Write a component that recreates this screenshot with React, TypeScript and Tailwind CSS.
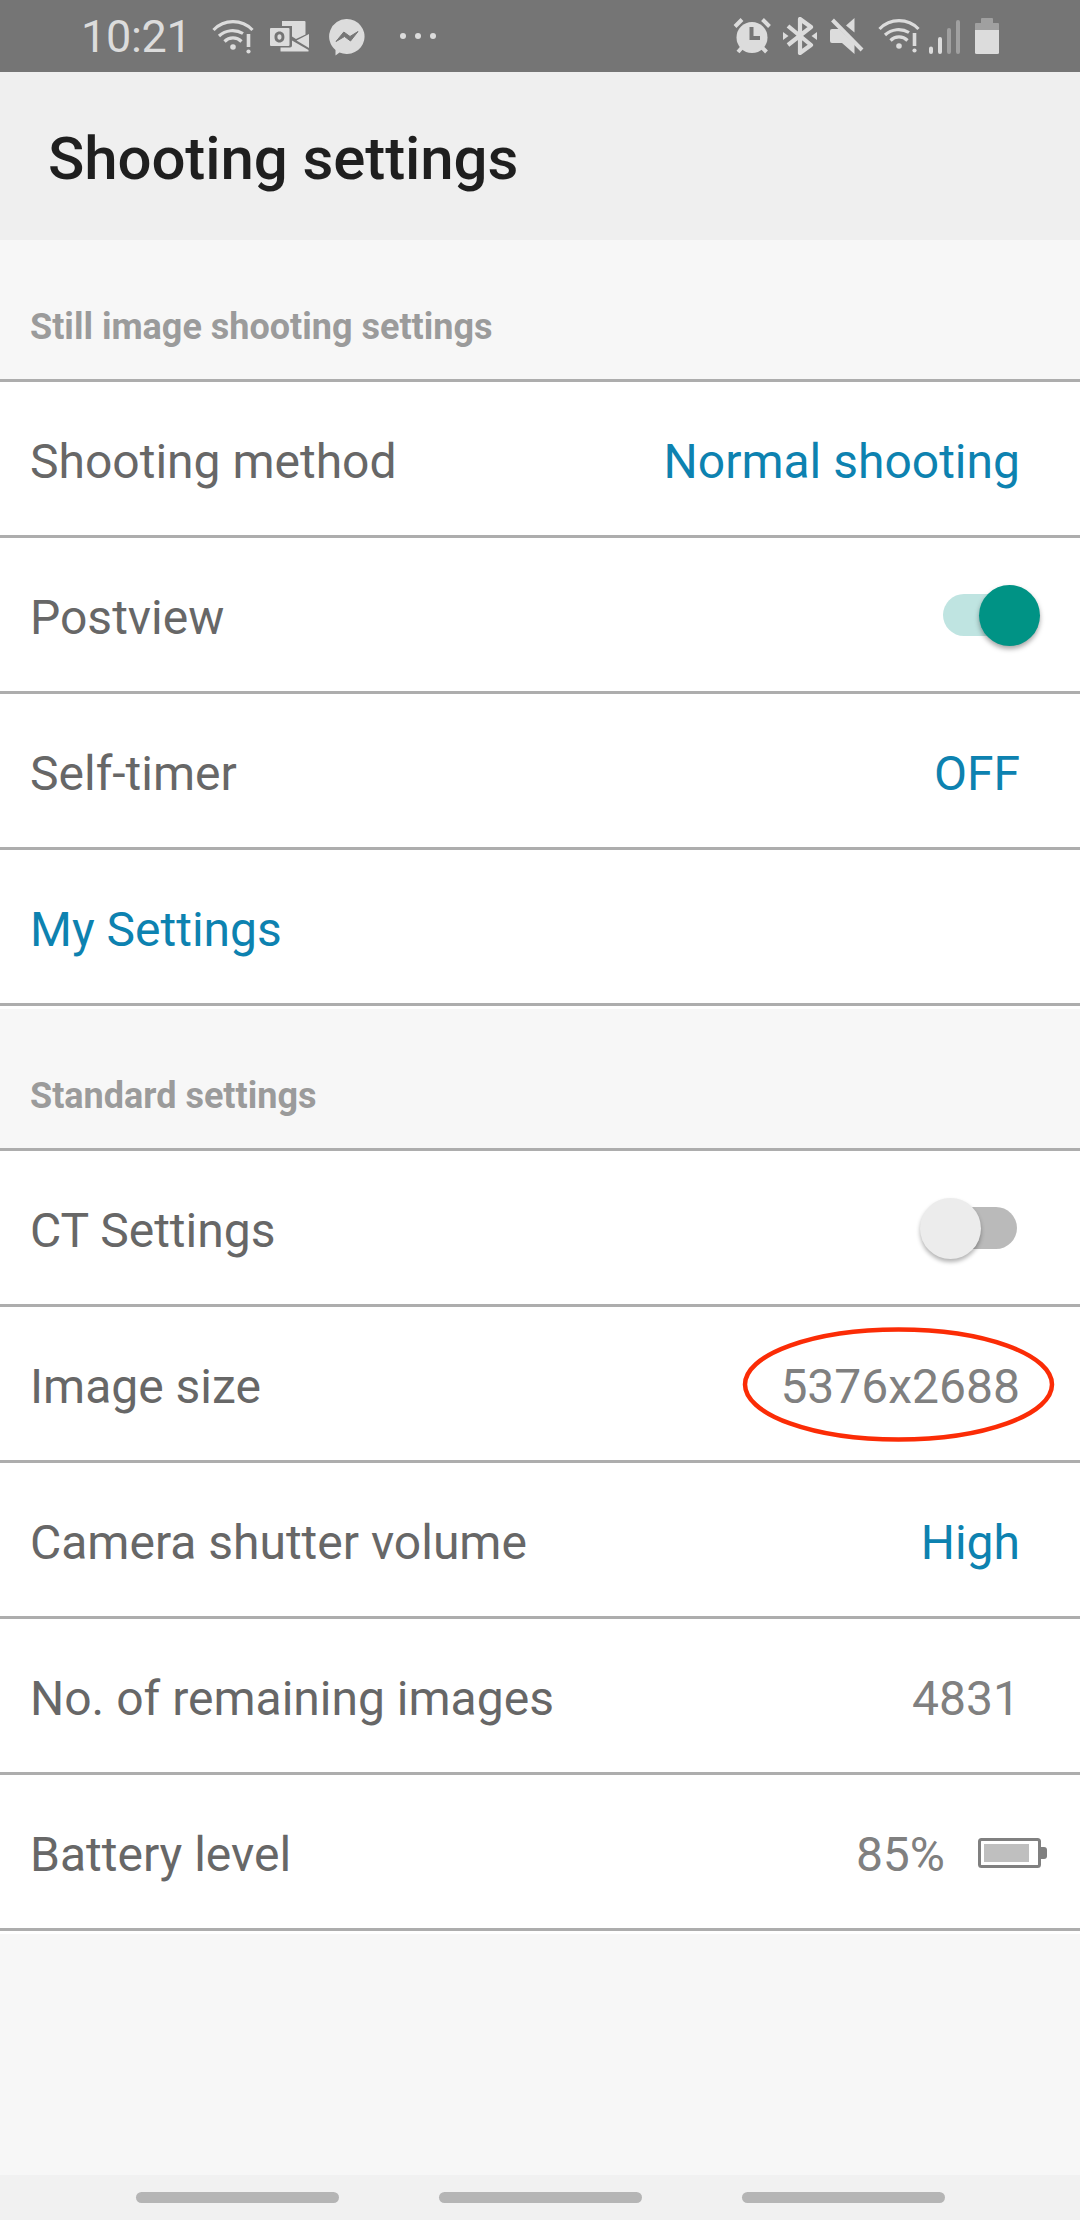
import React from 'react';

interface RowProps {
  label: string;
  link?: boolean;
  children?: React.ReactNode;
}

const WifiAlert = () => (
  <svg className="w-[42px] h-[36px]" viewBox="0 0 42 36" fill="none" stroke="#dcdcdc">
    <path d="M1.5 11A27 27 0 0 1 40.5 11" strokeWidth="3.2" />
    <path d="M7 17A20 20 0 0 1 31 14.5" strokeWidth="3.2" />
    <path d="M12.5 22.5A12 12 0 0 1 29.500 22.500" strokeWidth="3.2" />
    <circle cx="21" cy="28" r="2.800" fill="#dcdcdc" stroke="none" />
    <path d="M36.500 15v13" strokeWidth="3.600" />
    <circle cx="36.500" cy="32.500" r="2.100" fill="#dcdcdc" stroke="none" />
  </svg>
);

const OutlookIcon = () => (
  <svg className="w-[39px] h-[32px]" viewBox="0 0 39 32" fill="#dcdcdc">
    <path d="M12 1h22.500q1 0 1 1v12.500L26 19l-4-2.500V6H12z" />
    <path d="M39 14v14L26.500 20.500z" />
    <path d="M10.500 27.500H20q2 0 2-2V20.500L38.500 30v1.500H11q-.5 0-.5-.5z" />
    <path fillRule="evenodd" d="M1 8h17.500q1 0 1 1v16q0 1-1 1H1q-1 0-1-1V9q0-1 1-1zM9.500 11.500c-3.300 0-5 2.300-5 5.500s1.800 5.500 4.900 5.500c3.200 0 5-2.300 5-5.500s-1.700-5.500-4.900-5.500zm0 2.800c1.300 0 2 1 2 2.700s-.8 2.700-2 2.700-2.100-1-2.100-2.700.8-2.700 2.100-2.700z" />
  </svg>
);

const MessengerIcon = () => (
  <svg className="w-[36px] h-[37px]" viewBox="0 0 36 37">
    <path fill="#dcdcdc" d="M18 0a18 17.500 0 1 1-7.500 33.600L6.500 36.500V31A17.500 17.500 0 0 1 18 0z" />
    <path fill="#767676" d="M7 22.500L14.800 13l6.200 4.500 8-5L21.500 22l-6-4.500z" stroke="#767676" strokeLinejoin="round" />
  </svg>
);

const AlarmIcon = () => (
  <svg className="w-[40px] h-[36px]" viewBox="0 0 40 36" stroke="#dcdcdc" fill="none">
    <circle cx="19" cy="19.500" r="15.500" fill="#dcdcdc" stroke="none" />
    <path d="M2 8.500l7-7M36.500 8.500l-7-7" strokeWidth="4" />
    <path d="M9 29.500L5 34M29 29.500l4.500 4.500" strokeWidth="4" />
    <path d="M18.500 9v11h8.500" stroke="#767676" strokeWidth="4" />
  </svg>
);

const BluetoothIcon = () => (
  <svg className="w-[34px] h-[38px]" viewBox="0 0 34 38" fill="none" stroke="#dcdcdc">
    <path d="M5 9l23 19-11 8V2l11 8L5 28" strokeWidth="4.200" strokeLinejoin="round" />
    <path d="M0 15l5.500 4L0 23zM34 15l-5.500 4 5.500 4z" fill="#dcdcdc" stroke="none" />
  </svg>
);

const MuteIcon = () => (
  <svg className="w-[34px] h-[37px]" viewBox="0 0 34 37" fill="#dcdcdc">
    <path d="M2 12h7l15.500 15.500V37L12 26H2q-2 0-2-2V14q0-2 2-2z" />
    <path d="M24.500 1v14.500L16 8.500z" />
    <path d="M2.500 3l29.500 30" fill="none" stroke="#dcdcdc" strokeWidth="4" />
  </svg>
);

const SignalIcon = () => (
  <svg className="w-[31px] h-[34px]" viewBox="0 0 31 34" strokeWidth="4" strokeLinecap="round">
    <path d="M2 28.500V32M11 19v13" stroke="#dcdcdc" />
    <path d="M20 10v22M29 2v30" stroke="#a0a0a0" />
  </svg>
);

const PhoneBattery = () => (
  <svg className="w-[24px] h-[36px]" viewBox="0 0 24 36">
    <path d="M7 0h10q1 0 1 1v4h5q1 0 1 1v7H0V6q0-1 1-1h5V1q0-1 1-1z" fill="#a0a0a0" />
    <path d="M0 12h24v22.500q0 1.500-1.500 1.500h-21Q0 36 0 34.500z" fill="#dcdcdc" />
  </svg>
);

const StatusBar = () => (
  <div className="h-[72px] bg-[#757575] flex items-start justify-between px-[81px]">
    <div className="flex items-start">
      <span className="w-[131px] mt-[9px] text-[45px] leading-[56px] tracking-[-0.3px] text-[#dcdcdc]">10:21</span>
      <div className="mt-[19px]"><WifiAlert /></div>
      <div className="mt-[20px] ml-[16px]"><OutlookIcon /></div>
      <div className="mt-[19px] ml-[20px]"><MessengerIcon /></div>
      <div className="mt-[33px] ml-[35px] flex gap-[9px]">
        <span className="size-[6px] rounded-full bg-[#dcdcdc]" />
        <span className="size-[6px] rounded-full bg-[#dcdcdc]" />
        <span className="size-[6px] rounded-full bg-[#dcdcdc]" />
      </div>
    </div>
    <div className="flex items-start">
      <div className="mt-[18px]"><AlarmIcon /></div>
      <div className="mt-[17px] ml-[10px]"><BluetoothIcon /></div>
      <div className="mt-[17px] ml-[13px]"><MuteIcon /></div>
      <div className="mt-[18px] ml-[14px]"><WifiAlert /></div>
      <div className="mt-[20px] ml-[9px]"><SignalIcon /></div>
      <div className="mt-[18px] ml-[15px]"><PhoneBattery /></div>
    </div>
  </div>
);

const SectionTitle = ({ children }: { children: React.ReactNode }) => (
  <h2 className="h-[142px] pl-[30px] pt-[66px] text-[36px] leading-[42px] font-bold text-[#9b9b9b] border-b-[3px] border-[#adadad]">
    {children}
  </h2>
);

const Row = ({ label, link, children }: RowProps) => (
  <div className="h-[156px] pl-[30px] bg-white border-b-[3px] border-[#adadad] flex items-center justify-between text-[48px] leading-[56px]">
    <span className={link ? 'pt-[7px] text-[#0d82b0]' : 'pt-[7px] text-[#676767]'}>{label}</span>
    {children}
  </div>
);

const Value = ({ children, muted }: { children: React.ReactNode; muted?: boolean }) => (
  <span className={muted ? 'pt-[7px] pr-[60px] text-[#808080]' : 'pt-[7px] pr-[60px] text-[#0d82b0]'}>{children}</span>
);

const Toggle = ({ on }: { on: boolean }) => (
  <div
    className={
      on
        ? 'w-[97px] h-[61px] mt-[2px] mr-[40px] flex items-center justify-end relative'
        : 'w-[97px] h-[61px] mt-[2px] mr-[63px] flex items-center relative'
    }
  >
    <span
      className={
        on
          ? 'absolute left-0 top-[9px] w-[74px] h-[42px] rounded-full bg-[#bfe4e1]'
          : 'absolute right-0 top-[9px] w-[74px] h-[42px] rounded-full bg-[#bababa]'
      }
    />
    <span
      className={
        on
          ? 'relative size-[61px] rounded-full bg-[#009385] shadow-[0_3px_5px_rgba(0,0,0,0.35)]'
          : 'relative size-[61px] rounded-full bg-[#ececec] shadow-[0_3px_4px_rgba(0,0,0,0.3)]'
      }
    />
  </div>
);

const BatteryIcon = () => (
  <svg className="w-[69px] h-[30px] mt-[3px]" viewBox="0 0 69 30">
    <rect x="1.500" y="1.500" width="60" height="27" rx="2" fill="none" stroke="#808080" strokeWidth="3" />
    <rect x="6" y="6" width="45" height="18" fill="#bfbfbf" />
    <path d="M63 9h3q3 0 3 3v6q0 3-3 3h-3z" fill="#808080" />
  </svg>
);

export default function App() {
  return (
    <div className="w-[1080px] h-[2220px] flex flex-col bg-[#f7f7f7] font-[Roboto,sans-serif] overflow-hidden">
      <StatusBar />
      <header className="h-[168px] bg-[#efefef] flex items-center pl-[48px] pt-[5px]">
        <h1 className="text-[60px] leading-[70px] tracking-[-0.1px] font-medium text-[#1f1f1f]">Shooting settings</h1>
      </header>

      <SectionTitle>Still image shooting settings</SectionTitle>
      <Row label="Shooting method">
        <Value>Normal shooting</Value>
      </Row>
      <Row label="Postview">
        <Toggle on />
      </Row>
      <Row label="Self-timer">
        <Value>OFF</Value>
      </Row>
      <Row label="My Settings" link />

      <div className="h-[3px] bg-white" />
      <SectionTitle>Standard settings</SectionTitle>
      <Row label="CT Settings">
        <Toggle on={false} />
      </Row>
      <Row label="Image size">
        <div className="relative flex">
          <Value muted>5376x2688</Value>
          {/* Highlight ring around the resolution */}
          <svg className="absolute right-[25px] top-[-26px] w-[313px] h-[117px]" viewBox="0 0 313 117">
            <ellipse cx="156.500" cy="58.500" rx="153.500" ry="55" fill="none" stroke="#fb2c06" strokeWidth="4.500" />
          </svg>
        </div>
      </Row>
      <Row label="Camera shutter volume">
        <Value>High</Value>
      </Row>
      <Row label="No. of remaining images">
        <Value muted>4831</Value>
      </Row>
      <Row label="Battery level">
        <div className="flex items-center pr-[33px]">
          <span className="pt-[7px] pr-[33px] text-[#808080]">85%</span>
          <BatteryIcon />
        </div>
      </Row>
      <div className="h-[3px] bg-white" />

      <nav className="mt-auto h-[45px] bg-[#f1f1f1] flex justify-center gap-[100px] pt-[17px]">
        <span className="w-[203px] h-[11px] rounded-full bg-[#b5b5b5]" />
        <span className="w-[203px] h-[11px] rounded-full bg-[#b5b5b5]" />
        <span className="w-[203px] h-[11px] rounded-full bg-[#b5b5b5]" />
      </nav>
    </div>
  );
}
